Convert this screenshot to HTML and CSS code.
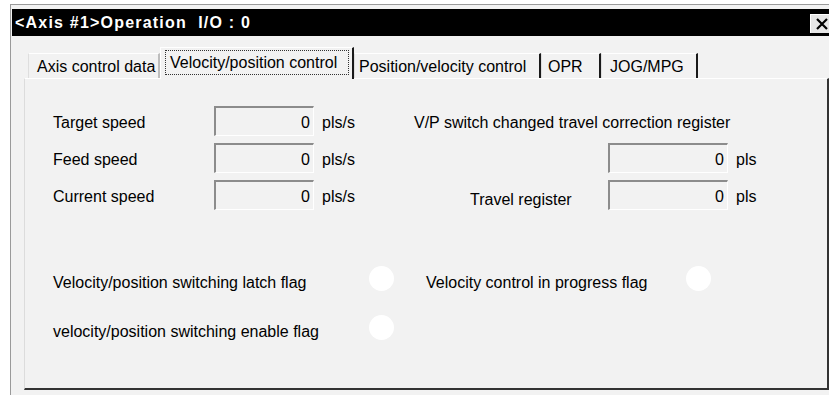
FILE: index.html
```html
<!DOCTYPE html>
<html lang="en">
<head>
    <meta charset="UTF-8">
    <title>Axis #1 Operation</title>
    <link rel="stylesheet" href="styles.css">
</head>
<body>
    <div class="window">
        <!-- title bar -->
        <div class="titlebar">
            <span class="title">&lt;Axis #1&gt;Operation&nbsp; I/O : 0</span>
            <span class="close">
                <svg width="14" height="12" viewBox="0 0 14 12">
                    <path d="M2 1 L12 11 M12 1 L2 11" stroke="#000" stroke-width="2.2" fill="none"/>
                </svg>
            </span>
        </div>

        <!-- tabs -->
        <div class="tabs">
            <div class="tab tab-axis">Axis control data</div>
            <div class="tab tab-active"><span class="focus">Velocity/position control</span></div>
            <div class="tab tab-pos">Position/velocity control</div>
            <div class="tab tab-opr">OPR</div>
            <div class="tab tab-jog">JOG/MPG</div>
        </div>

        <div class="panel">
            <!-- speed / register readouts -->
            <div class="readouts">
                <div class="label">Target speed</div>
                <div class="field">0</div>
                <div class="unit">pls/s</div>
                <div class="label right-head">V/P switch changed travel correction register</div>

                <div class="label">Feed speed</div>
                <div class="field">0</div>
                <div class="unit">pls/s</div>
                <div class="label"></div>
                <div class="field">0</div>
                <div class="unit">pls</div>

                <div class="label">Current speed</div>
                <div class="field">0</div>
                <div class="unit">pls/s</div>
                <div class="label travel">Travel register</div>
                <div class="field">0</div>
                <div class="unit">pls</div>
            </div>

            <!-- flags -->
            <div class="flags">
                <div class="flag-label">Velocity/position switching latch flag</div>
                <div class="lamp"></div>
                <div class="flag-label">Velocity control in progress flag</div>
                <div class="lamp"></div>

                <div class="flag-label">velocity/position switching enable flag</div>
                <div class="lamp"></div>
            </div>
        </div>
    </div>
</body>
</html>
```

FILE: styles.css
```css
body {
    margin: 0;
    background: #fff;
    font-family: "Liberation Sans", Arial, sans-serif;
    font-size: 16px;
    color: #000;
    overflow: hidden;
}
.window {
    margin: 4px 0 0 10px;
    height: 391px;
    padding: 4px 0 0 1px;
    box-sizing: border-box;
    border-top: 1px solid #9a9a9a;
    border-left: 1px solid #9a9a9a;
    background: #f2f2f2;
}
.titlebar {
    height: 27px;
    background: #000;
    color: #fff;
    display: flex;
    align-items: center;
    justify-content: space-between;
    padding-left: 3px;
}
.title {
    font-weight: bold;
    letter-spacing: 1.2px;
}
.close {
    width: 26px;
    height: 19px;
    margin: 1px -7px 0 0;
    box-sizing: border-box;
    padding: 3px 0 0 4px;
    background: #e6e6e6;
    border-top: 1px solid #fff;
    border-left: 1px solid #fff;
}
.close svg {
    display: block;
}

/* tab strip */
.tabs {
    display: flex;
    align-items: flex-end;
    height: 32px;
    margin: 10px 0 0 16px;
    position: relative;
    z-index: 1;
}
.tab {
    height: 25px;
    line-height: 25px;
    box-sizing: border-box;
    padding-left: 6px;
    border-top: 1px solid #fff;
    border-left: 1px solid #dedede;
    border-right: 2px solid #1a1a1a;
    white-space: nowrap;
}
.tab-axis { width: 132px; padding-left: 8px; border-right-color: #bdbdbd; }
.tab-active {
    width: 194px;
    height: 32px;
    padding: 2px 3px 5px 4px;
    line-height: 23px;
    background: #f2f2f2;
    border-left: 1px solid #fff;
    margin-bottom: -1px;
}
.focus {
    display: block;
    padding-left: 4px;
    border: 1px dotted #333;
}
.tab-pos { width: 187px; padding-left: 4px; }
.tab-opr { width: 60px; }
.tab-jog { width: 97px; padding-left: 8px; }

/* main page */
.panel {
    margin-left: 12px;
    height: 312px;
    box-sizing: border-box;
    border-top: 1px solid #fff;
    border-left: 1px solid #dcdcdc;
    border-right: 2px solid #333;
    border-bottom: 2px solid #333;
    padding: 27px 0 0 28px;
}
.readouts {
    display: grid;
    grid-template-columns: 161px 100px 100px 194px 120px auto;
    grid-auto-rows: 30px;
    row-gap: 7px;
    align-items: center;
}
.label {
    white-space: nowrap;
    padding-top: 4px;
}
.right-head {
    grid-column: 4 / 7;
}
.travel {
    padding-left: 56px;
    padding-top: 9px;
}
.field {
    height: 30px;
    line-height: 30px;
    box-sizing: border-box;
    text-align: right;
    padding-right: 3px;
    border-top: 2px solid #8c8c8c;
    border-left: 2px solid #8c8c8c;
    border-right: 1px solid #fff;
    border-bottom: 1px solid #fff;
}
.unit {
    padding: 4px 0 0 8px;
}
.flags {
    display: grid;
    grid-template-columns: 316px 25px 32px 260px 25px;
    grid-auto-rows: 25px;
    row-gap: 24px;
    align-items: center;
    margin-top: 56px;
}
.flags .flag-label:nth-child(3) {
    grid-column: 4;
}
.flag-label {
    white-space: nowrap;
    padding-top: 8px;
}
.lamp {
    width: 25px;
    height: 25px;
    border-radius: 50%;
    background: #fff;
}
```
